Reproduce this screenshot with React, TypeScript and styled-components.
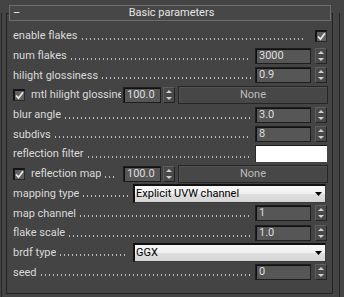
import React from 'react';
import styled, { createGlobalStyle } from 'styled-components';

const Global = createGlobalStyle`
  html, body { margin: 0; padding: 0; background: #444444; }
  body { width: 344px; height: 297px; overflow: hidden; font-family: Roboto, "Liberation Sans", sans-serif; }
`;

const Page = styled.div`
  width: 344px;
  height: 297px;
  box-sizing: border-box;
  padding-top: 13px;
  background: #444444;
  display: flex;
  flex-direction: column;
`;

const Frame = styled.div`
  margin-left: 1px;
  width: 339px;
  flex: 1;
  box-sizing: border-box;
  border-left: 1px solid #262626;
  border-right: 1px solid #262626;
  padding-left: 4px;
`;

const Rollout = styled.div`
  width: 327px;
  height: 281px;
  box-sizing: border-box;
  border: 1px solid #232323;
  display: flex;
  flex-direction: column;
`;

const Header = styled.div`
  margin: -9px 0 0 2px;
  width: 322px;
  height: 16px;
  box-sizing: border-box;
  border: 1px solid #6c6c6c;
  background: #474747;
  display: grid;
  grid-template-columns: 1fr auto 1fr;
  align-items: center;
  padding-left: 3px;
  color: #e6e6e6;
  font-size: 11px;
  line-height: 14px;
`;

const Collapse = styled.span`
  justify-self: start;
  color: #f0f0f0;
`;

const Title = styled.span`
  white-space: nowrap;
`;

const Rows = styled.div`
  margin-top: 5px;
  display: grid;
  grid-auto-rows: 19.7px;
  padding: 0 5px 0 6px;
`;

const Row = styled.div`
  display: flex;
  align-items: center;
  min-width: 0;
`;

const Label = styled.span`
  color: #dadada;
  font-size: 11px;
  line-height: 13px;
  white-space: nowrap;
  overflow: hidden;
  flex: none;
`;

const ClipLabel = styled(Label)`
  flex: 0 1 auto;
  min-width: 0;
  text-overflow: clip;
`;

const Leader = styled.span<{ $end?: number }>`
  flex: 1;
  min-width: 0;
  height: 2px;
  margin: 6px ${(p) => p.$end ?? 4}px 0 4px;
  background-image: linear-gradient(to right, #bdbdbd 1px, transparent 1px);
  background-size: 4px 2px;
  background-repeat: repeat-x;
`;

const CheckLabel = styled.span`
  display: flex;
  align-items: center;
  width: 90px;
  flex: none;
  margin-left: 6px;
  overflow: hidden;
`;

const NumBox = styled.div<{ $w: number; $gap?: number }>`
  width: ${(p) => p.$w}px;
  height: 16px;
  flex: none;
  margin-left: ${(p) => p.$gap ?? 0}px;
  box-sizing: border-box;
  background: #565656;
  border: 1px solid #1e1e1e;
  box-shadow: inset 1px 1px 0 #111111;
  color: #dedede;
  font-size: 11px;
  line-height: 14px;
  padding-left: 3px;
  white-space: nowrap;
  overflow: hidden;
`;

const SpinWrap = styled.div<{ $gap: number }>`
  width: 12px;
  height: 16px;
  flex: none;
  margin-left: ${(p) => p.$gap}px;
  box-sizing: border-box;
  border: 1px solid;
  border-color: #5e5e5e #242424 #242424 #5e5e5e;
  background: #494949;
  display: flex;
  svg { display: block; }
`;

const Box = styled.span`
  width: 12px;
  height: 12px;
  flex: none;
  box-sizing: border-box;
  border-top: 2px solid #141414;
  border-left: 2px solid #141414;
  border-right: 1px solid #2a2a2a;
  border-bottom: 1px solid #2a2a2a;
  background: #5f5f5f;
  display: flex;
  align-items: center;
  justify-content: center;
  svg { display: block; }
`;

const MapButton = styled.div`
  margin-left: 3px;
  width: 150px;
  height: 18px;
  flex: none;
  box-sizing: border-box;
  border: 1px solid #262626;
  background: #474747;
  box-shadow: inset 1px 1px 0 #525252;
  color: #bcbcbc;
  font-size: 11px;
  line-height: 16px;
  text-align: center;
`;

const Swatch = styled.div`
  width: 72px;
  height: 17px;
  flex: none;
  box-sizing: border-box;
  background: #ffffff;
  border-top: 1px solid #1a1a1a;
  border-left: 1px solid #2a2a2a;
`;

const Select = styled.div`
  width: 193px;
  height: 19px;
  flex: none;
  margin-right: 1px;
  box-sizing: border-box;
  border: 1px solid #3a3a3a;
  border-top: 2px solid #111111;
  border-left: 2px solid #111111;
  background: linear-gradient(#f8f8f8 0%, #efefef 50%, #dedede 52%, #d6d6d6 100%);
  display: flex;
  align-items: center;
  padding: 0 3px 0 1px;
  color: #000000;
  font-size: 11px;
  line-height: 15px;
  svg { display: block; margin-left: auto; }
`;

const Spinner: React.FC<{ gap: number }> = ({ gap }) => (
  <SpinWrap $gap={gap}>
    <svg width="10" height="14" viewBox="0 0 10 14">
      <path d="M2 5 L5 2 L8 5 Z" fill="#d0d0d0" />
      <path d="M2 9 L8 9 L5 12 Z" fill="#d0d0d0" />
    </svg>
  </SpinWrap>
);

const CheckBox: React.FC = () => (
  <Box>
    <svg width="9" height="9" viewBox="0 0 9 9">
      <path d="M1 4.5 L3.5 7.2 L8 1.2" fill="none" stroke="#e8e8e8" strokeWidth="1.8" />
    </svg>
  </Box>
);

const SpinnerRow: React.FC<{ label: string; value: string }> = ({ label, value }) => (
  <Row>
    <Label>{label}</Label>
    <Leader />
    <NumBox $w={56}>{value}</NumBox>
    <Spinner gap={4} />
  </Row>
);

const SelectRow: React.FC<{ label: string; value: string }> = ({ label, value }) => (
  <Row>
    <Label>{label}</Label>
    <Leader $end={5} />
    <Select>
      <span>{value}</span>
      <svg width="7" height="4" viewBox="0 0 7 4">
        <path d="M0 0 L7 0 L3.5 4 Z" fill="#000" />
      </svg>
    </Select>
  </Row>
);

const MapRow: React.FC<{ label: string; leader?: boolean }> = ({ label, leader }) => (
  <Row>
    <CheckBox />
    <CheckLabel>
      <ClipLabel>{label}</ClipLabel>
      {leader && <Leader $end={6} />}
    </CheckLabel>
    <NumBox $w={38} $gap={2}>100.0</NumBox>
    <Spinner gap={2} />
    <MapButton>None</MapButton>
  </Row>
);

export default function App() {
  return (
    <>
      <Global />
      <Page>
        <Frame>
          <Rollout>
            <Header>
              <Collapse>–</Collapse>
              <Title>Basic parameters</Title>
              <span />
            </Header>
            <Rows>
              <Row>
                <Label>enable flakes</Label>
                <Leader $end={10} />
                <CheckBox />
              </Row>
              <SpinnerRow label="num flakes" value="3000" />
              <SpinnerRow label="hilight glossiness" value="0.9" />
              <MapRow label="mtl hilight glossiness" />
              <SpinnerRow label="blur angle" value="3.0" />
              <SpinnerRow label="subdivs" value="8" />
              <Row>
                <Label>reflection filter</Label>
                <Leader />
                <Swatch />
              </Row>
              <MapRow label="reflection map" leader />
              <SelectRow label="mapping type" value="Explicit UVW channel" />
              <SpinnerRow label="map channel" value="1" />
              <SpinnerRow label="flake scale" value="1.0" />
              <SelectRow label="brdf type" value="GGX" />
              <SpinnerRow label="seed" value="0" />
            </Rows>
          </Rollout>
        </Frame>
      </Page>
    </>
  );
}
